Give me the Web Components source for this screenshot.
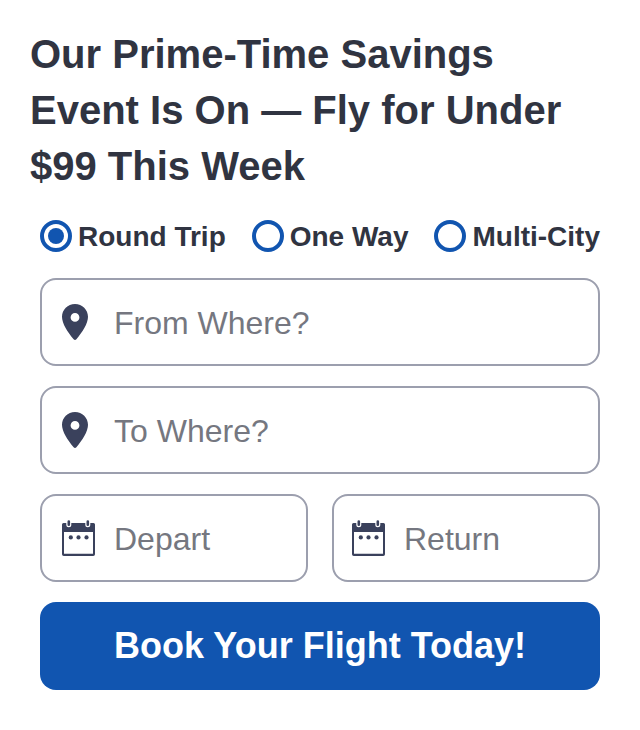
<!DOCTYPE html>
<html lang="en">
<head>
<meta charset="utf-8">
<title>Flight booking</title>
<style>
body { margin: 0; background: #fff; color: #303441; font-family: "Liberation Sans", Arial, sans-serif; }
</style>
</head>
<body>
<flight-promo>
  <span slot="title">Our Prime-Time Savings Event Is On — Fly for Under $99 This Week</span>
  <trip-options></trip-options>
  <search-field icon="pin" label="From Where?"></search-field>
  <search-field icon="pin" label="To Where?"></search-field>
  <date-pair>
    <search-field icon="calendar" label="Depart"></search-field>
    <search-field class="end" icon="calendar" label="Return"></search-field>
  </date-pair>
  <book-button>Book Your Flight Today!</book-button>
</flight-promo>
<script>
const icons = {
  pin: '<svg width="26" height="36" viewBox="0 0 26 36" aria-hidden="true"><path fill="#3a415c" fill-rule="evenodd" d="M13 0C5.7 0 0 5.7 0 12.8C0 19.500 5.500 28 11.6 35.3Q13 36.700 14.4 35.3C20.500 28 26 19.500 26 12.8C26 5.7 20.3 0 13 0ZM13 9a4.4 4.4 0 1 1 0 8.8a4.4 4.4 0 0 1 0-8.8Z"/></svg>',
  calendar: '<svg width="34" height="36" viewBox="0 0 34 36" aria-hidden="true"><path fill="#3a415c" fill-rule="evenodd" d="M1.5 3H31.5Q33 3 33 4.5V34.2Q33 36 31.2 36H1.8Q0 36 0 34.2V4.5Q0 3 1.5 3ZM2 12V33.8H31V12Z"/><g stroke-linecap="round"><path stroke="#fff" stroke-width="5" d="M6.8 1V4.8M25.8 1V4.8"/><path stroke="#3a415c" stroke-width="2.6" d="M6.8 1.500V4.8M25.8 1.500V4.8"/></g><g fill="#3a415c"><circle cx="8.8" cy="17.4" r="2.100"/><circle cx="16.5" cy="17.4" r="2.100"/><circle cx="24.5" cy="17.4" r="2.100"/></g></svg>'
};
class Base extends HTMLElement {
  constructor() { super(); this.attachShadow({ mode: 'open' }); }
  connectedCallback() { this.shadowRoot.innerHTML = this.view(); }
}
customElements.define('flight-promo', class extends Base {
  view() { return `<style>
    :host { display: block; padding: 26px 30px 40px; }
    h1 { margin: 0 0 20px; font-size: 40px; line-height: 56px; font-weight: 700; }
    form { display: flex; flex-direction: column; gap: 20px; padding: 0 10px; }
  </style><h1><slot name="title"></slot></h1><form><slot></slot></form>`; }
});
customElements.define('trip-options', class extends Base {
  view() { return `<style>
    :host { display: block; }
    div { display: flex; justify-content: space-between; }
    label { display: flex; align-items: center; gap: 6px; height: 44px; font-size: 28px; line-height: 32px; font-weight: 700; white-space: nowrap; }
    span { padding-top: 2px; }
    input { appearance: none; box-sizing: border-box; display: grid; place-items: center; width: 32px; height: 32px; margin: 0; border: 4px solid #1155b0; border-radius: 50%; background: #fff; }
    input:checked::before { content: ""; width: 16px; height: 16px; border-radius: 50%; background: #1155b0; }
  </style><div role="radiogroup" aria-label="Trip type">
    <label><input type="radio" name="trip" checked><span>Round Trip</span></label>
    <label><input type="radio" name="trip"><span>One Way</span></label>
    <label><input type="radio" name="trip"><span>Multi-City</span></label>
  </div>`; }
});
customElements.define('search-field', class extends Base {
  view() { const text = this.getAttribute('label'), icon = this.getAttribute('icon'); return `<style>
    :host { display: block; min-width: 0; }
    label { box-sizing: border-box; display: flex; align-items: center; height: 88px; padding: 0 20px; border: 2px solid #9c9fae; border-radius: 16px; background: #fff; }
    :host(.end) label { padding-left: 18px; }
    .icon { flex: 0 0 52px; display: flex; }
    input { flex: 1; min-width: 0; border: 0; padding: 2px 0 0; background: none; outline: 0; color: #303441; font: 32px/40px "Liberation Sans", Arial, sans-serif; }
    input::placeholder { color: #757780; opacity: 1; }
  </style><label><span class="icon">${icons[icon]}</span><input type="text" placeholder="${text}" aria-label="${text}"></label>`; }
});
customElements.define('date-pair', class extends Base {
  view() { return `<style>
    :host { display: grid; grid-template-columns: 1fr 1fr; gap: 24px; }
  </style><slot></slot>`; }
});
customElements.define('book-button', class extends Base {
  view() { return `<style>
    :host { display: block; }
    button { width: 100%; height: 88px; padding: 0; border: 0; border-radius: 16px; background: #1155b0; color: #fff; font: 700 36px/44px "Liberation Sans", Arial, sans-serif; }
  </style><button type="button"><slot></slot></button>`; }
});
</script>
</body>
</html>
